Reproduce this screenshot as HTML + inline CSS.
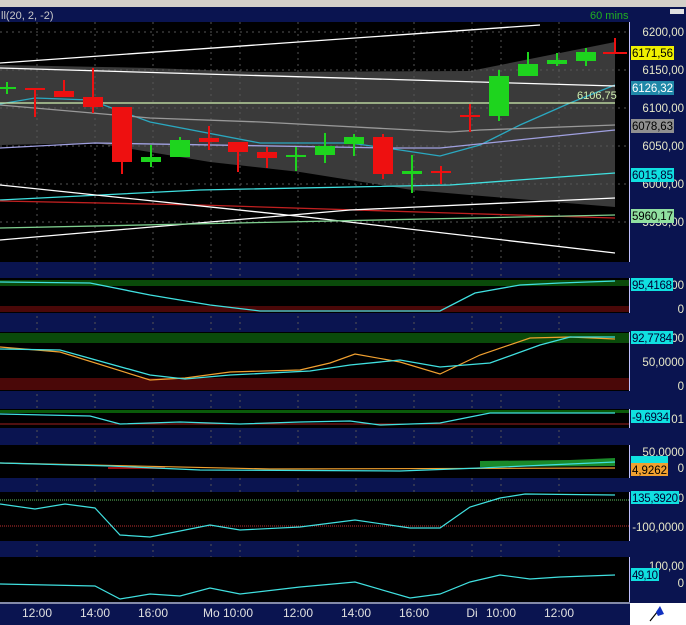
<!DOCTYPE html>
<html><head><meta charset="utf-8"><style>
html,body{margin:0;padding:0;background:#0a1450;}
svg{display:block;font-family:"Liberation Sans",sans-serif;}
</style></head><body>
<svg width="686" height="625" viewBox="0 0 686 625" xmlns="http://www.w3.org/2000/svg">
<rect x="0" y="0" width="686" height="625" fill="#0a1450"/>
<rect x="0" y="0" width="686" height="7" fill="#d4d0c8"/>
<text x="1" y="19" font-size="11" fill="#c8c8c8">ll(20, 2, -2)</text>
<text x="590" y="19" font-size="11" fill="#20b020">60 mins</text>
<rect x="670" y="9" width="14" height="5" fill="#e0e0e0"/>
<rect x="0" y="22" width="630" height="240" fill="#000"/>
<polygon points="0,65 150,68 260,72 470,71 615,42 615,207 470,195 412,190 300,172 210,162 95,143 0,145" fill="#3a3a3a"/>
<g stroke="#555" stroke-dasharray="2,4" stroke-width="1">
<line x1="0" y1="32" x2="630" y2="32"/><line x1="0" y1="70" x2="630" y2="70"/><line x1="0" y1="108" x2="630" y2="108"/><line x1="0" y1="146" x2="630" y2="146"/><line x1="0" y1="184" x2="630" y2="184"/><line x1="0" y1="222" x2="630" y2="222"/>
<line x1="37" y1="22" x2="37" y2="602"/><line x1="95" y1="22" x2="95" y2="602"/><line x1="153" y1="22" x2="153" y2="602"/><line x1="211" y1="22" x2="211" y2="602"/><line x1="240" y1="22" x2="240" y2="602"/><line x1="298" y1="22" x2="298" y2="602"/><line x1="356" y1="22" x2="356" y2="602"/><line x1="414" y1="22" x2="414" y2="602"/><line x1="472" y1="22" x2="472" y2="602"/><line x1="501" y1="22" x2="501" y2="602"/><line x1="559" y1="22" x2="559" y2="602"/>
</g>
<g fill="none" stroke-width="1.3">
<polyline points="0,104 35,98 90,100 150,122 260,143 350,143 400,150 440,156 480,145 520,125 570,103 615,85" stroke="#2aa8c0"/>
<polyline points="0,105 150,118 260,122 450,132 480,130 615,125" stroke="#999"/>
<polyline points="0,148 95,143 390,148 440,148 615,130" stroke="#a0a0e0"/>
<polyline points="0,63 540,25" stroke="#fff"/>
<polyline points="0,68 615,86" stroke="#fff"/>
<line x1="0" y1="103" x2="615" y2="103" stroke="#d0f0b0"/>
<polyline points="0,200 200,190 450,185 615,173" stroke="#40e0e0"/>
<polyline points="0,201 200,205 450,213 615,218" stroke="#c02020"/>
<polyline points="0,185 306,217 615,253" stroke="#fff"/>
<polyline points="0,240 350,210 615,198" stroke="#fff"/>
<polyline points="0,228 615,215" stroke="#80d090"/>
</g>
<text x="577" y="99" font-size="11" fill="#d0f0b0">6106,75</text>
<g stroke-width="2">
<g stroke="#1ed41e"><line x1="7" y1="82" x2="7" y2="94"/><line x1="0" y1="88" x2="16" y2="88"/></g>
<g stroke="#ee1010"><line x1="35" y1="89" x2="35" y2="117"/><line x1="25" y1="89" x2="45" y2="89"/></g>
<g stroke="#ee1010"><line x1="64" y1="80" x2="64" y2="97"/></g><rect x="54" y="91" width="20" height="6" fill="#ee1010"/>
<g stroke="#ee1010"><line x1="93" y1="68" x2="93" y2="113"/></g><rect x="83" y="97" width="20" height="10" fill="#ee1010"/>
<g stroke="#ee1010"><line x1="122" y1="107" x2="122" y2="174"/></g><rect x="112" y="107" width="20" height="55" fill="#ee1010"/>
<g stroke="#1ed41e"><line x1="151" y1="145" x2="151" y2="167"/></g><rect x="141" y="157" width="20" height="5" fill="#1ed41e"/>
<g stroke="#1ed41e"><line x1="180" y1="137" x2="180" y2="157"/></g><rect x="170" y="140" width="20" height="17" fill="#1ed41e"/>
<g stroke="#ee1010"><line x1="209" y1="126" x2="209" y2="150"/></g><rect x="199" y="138" width="20" height="4" fill="#ee1010"/>
<g stroke="#ee1010"><line x1="238" y1="142" x2="238" y2="172"/></g><rect x="228" y="142" width="20" height="10" fill="#ee1010"/>
<g stroke="#ee1010"><line x1="267" y1="147" x2="267" y2="168"/></g><rect x="257" y="152" width="20" height="6" fill="#ee1010"/>
<g stroke="#1ed41e"><line x1="296" y1="147" x2="296" y2="171"/><line x1="286" y1="156" x2="306" y2="156"/></g>
<g stroke="#1ed41e"><line x1="325" y1="133" x2="325" y2="163"/></g><rect x="315" y="146" width="20" height="9" fill="#1ed41e"/>
<g stroke="#1ed41e"><line x1="354" y1="134" x2="354" y2="156"/></g><rect x="344" y="137" width="20" height="7" fill="#1ed41e"/>
<g stroke="#ee1010"><line x1="383" y1="134" x2="383" y2="179"/></g><rect x="373" y="137" width="20" height="37" fill="#ee1010"/>
<g stroke="#1ed41e"><line x1="412" y1="155" x2="412" y2="193"/></g><rect x="402" y="171" width="20" height="3" fill="#1ed41e"/>
<g stroke="#ee1010"><line x1="441" y1="166" x2="441" y2="184"/><line x1="431" y1="172" x2="451" y2="172"/></g>
<g stroke="#ee1010"><line x1="470" y1="104" x2="470" y2="132"/><line x1="460" y1="116" x2="480" y2="116"/></g>
<g stroke="#1ed41e"><line x1="499" y1="70" x2="499" y2="121"/></g><rect x="489" y="76" width="20" height="40" fill="#1ed41e"/>
<g stroke="#1ed41e"><line x1="528" y1="52" x2="528" y2="76"/></g><rect x="518" y="64" width="20" height="12" fill="#1ed41e"/>
<g stroke="#1ed41e"><line x1="557" y1="53" x2="557" y2="66"/></g><rect x="547" y="60" width="20" height="4" fill="#1ed41e"/>
<g stroke="#1ed41e"><line x1="586" y1="48" x2="586" y2="66"/></g><rect x="576" y="52" width="20" height="9" fill="#1ed41e"/>
<g stroke="#ee1010"><line x1="615" y1="38" x2="615" y2="53"/><line x1="603" y1="53" x2="627" y2="53"/></g>
</g>
<rect x="629" y="22" width="1" height="240" fill="#c0c0ff"/>
<g font-size="11.5" fill="#e8e8c8" text-anchor="end">
<text x="684" y="36">6200,00</text><text x="684" y="74">6150,00</text><text x="684" y="112">6100,00</text><text x="684" y="150">6050,00</text><text x="684" y="188">6000,00</text><text x="684" y="226">5950,00</text>
</g>
<g font-size="11.5">
<rect x="631" y="46" width="43" height="14" fill="#f0f000"/><text x="632" y="57" fill="#000" textLength="41">6171,56</text>
<rect x="631" y="81" width="43" height="14" fill="#1f88a8"/><text x="632" y="92" fill="#fff" textLength="41">6126,32</text>
<rect x="631" y="119" width="43" height="14" fill="#909090"/><text x="632" y="130" fill="#000" textLength="41">6078,63</text>
<rect x="631" y="168" width="43" height="14" fill="#10e0e0"/><text x="632" y="179" fill="#003" textLength="41">6015,85</text>
<rect x="631" y="209" width="43" height="14" fill="#90e0a0"/><text x="632" y="220" fill="#000" textLength="41">5960,17</text>
</g>
<rect x="0" y="278" width="630" height="35" fill="#000"/>
<rect x="0" y="280" width="630" height="6" fill="#0a4a0a"/><rect x="0" y="306" width="630" height="6" fill="#4a0808"/>
<polyline points="0,282 90,283 150,295 210,305 260,311 310,311 400,311 440,311 475,293 520,285 560,283 615,281" fill="none" stroke="#40e0e0" stroke-width="1.3"/>
<rect x="629" y="278" width="1" height="35" fill="#c0c0ff"/>
<text x="684" y="289" font-size="11.5" fill="#e8e8c8" text-anchor="end">00</text>
<rect x="631" y="278" width="42" height="13" fill="#10e0e0"/><text x="632" y="289" font-size="11.5" fill="#003" textLength="40">95,4168</text>
<text x="684" y="313" font-size="11.5" fill="#e8e8c8" text-anchor="end">0</text>
<rect x="0" y="332" width="630" height="59" fill="#000"/>
<rect x="0" y="333" width="630" height="10" fill="#0a4a0a"/><rect x="0" y="378" width="630" height="12" fill="#4a0808"/>
<polyline points="0,347 60,352 150,380 185,378 230,372 300,370 330,363 355,354 400,362 440,374 480,355 530,338 570,337 615,339" fill="none" stroke="#f0a030" stroke-width="1.2"/>
<polyline points="0,349 60,350 150,375 185,379 230,375 310,371 350,365 400,360 440,367 490,363 540,345 570,337 615,337" fill="none" stroke="#40e0e0" stroke-width="1.3"/>
<rect x="629" y="332" width="1" height="59" fill="#c0c0ff"/>
<text x="684" y="342" font-size="11.5" fill="#e8e8c8" text-anchor="end">00</text>
<rect x="631" y="331" width="42" height="13" fill="#10e0e0"/><text x="632" y="342" font-size="11.5" fill="#003" textLength="40">92,7784</text>
<text x="684" y="366" font-size="11.5" fill="#e8e8c8" text-anchor="end">50,0000</text>
<text x="684" y="390" font-size="11.5" fill="#e8e8c8" text-anchor="end">0</text>
<rect x="0" y="409" width="630" height="19" fill="#000"/>
<rect x="0" y="410" width="630" height="3" fill="#0a5a0a"/><line x1="0" y1="424" x2="630" y2="424" stroke="#a02020"/>
<polyline points="0,414 90,416 120,424 180,422 240,424 300,422 350,421 380,425 440,423 490,413 615,413" fill="none" stroke="#40e0e0" stroke-width="1.3"/>
<rect x="629" y="409" width="1" height="19" fill="#c0c0ff"/>
<text x="684" y="423" font-size="11.5" fill="#e8e8c8" text-anchor="end">01</text>
<rect x="631" y="410" width="39" height="13" fill="#10e0e0"/><text x="632" y="421" font-size="11.5" fill="#003" textLength="37">-9,6934</text>
<rect x="0" y="445" width="630" height="33" fill="#000"/>
<rect x="108" y="467" width="57" height="2" fill="#a01010"/>
<polygon points="480,467 480,461 570,460 615,458 615,466" fill="#1a8a2a"/>
<polyline points="0,463 270,469 615,468" fill="none" stroke="#f0a030" stroke-width="1.2"/>
<polyline points="0,463 110,466 200,470 400,471 480,468 615,462" fill="none" stroke="#40e0e0" stroke-width="1.2"/>
<rect x="629" y="445" width="1" height="33" fill="#c0c0ff"/>
<text x="684" y="456" font-size="11.5" fill="#e8e8c8" text-anchor="end">50,0000</text>
<rect x="631" y="456" width="37" height="9" fill="#10e0e0"/>
<rect x="631" y="463" width="37" height="13" fill="#f0a030"/><text x="632" y="474" font-size="11.5" fill="#000" textLength="35">4,9262</text>
<text x="684" y="472" font-size="11.5" fill="#e8e8c8" text-anchor="end">0</text>
<rect x="0" y="492" width="630" height="49" fill="#000"/>
<line x1="0" y1="500" x2="630" y2="500" stroke="#60c060" stroke-dasharray="1,1"/>
<line x1="0" y1="526" x2="630" y2="526" stroke="#c03030" stroke-dasharray="1,1"/>
<polyline points="0,504 35,509 65,504 95,508 120,535 150,537 210,525 240,530 300,527 355,520 410,528 440,528 470,507 500,498 525,494 615,495" fill="none" stroke="#40e0e0" stroke-width="1.2"/>
<rect x="629" y="492" width="1" height="49" fill="#c0c0ff"/>
<text x="684" y="502" font-size="11.5" fill="#e8e8c8" text-anchor="end">0</text>
<rect x="631" y="491" width="48" height="13" fill="#10e0e0"/><text x="632" y="502" font-size="11.5" fill="#003" textLength="46">135,3920</text>
<text x="684" y="531" font-size="11.5" fill="#e8e8c8" text-anchor="end">-100,0000</text>
<rect x="0" y="557" width="630" height="45" fill="#000"/>
<polyline points="0,584 95,586 120,599 150,594 180,596 210,588 240,594 300,587 355,582 410,598 440,594 470,582 500,575 530,579 560,577 615,575" fill="none" stroke="#40e0e0" stroke-width="1.2"/>
<rect x="629" y="557" width="1" height="45" fill="#c0c0ff"/>
<text x="684" y="570" font-size="11.5" fill="#e8e8c8" text-anchor="end">100,00</text>
<rect x="631" y="568" width="28" height="13" fill="#10e0e0"/><text x="632" y="579" font-size="11.5" fill="#003" textLength="26">49,10</text>
<text x="684" y="587" font-size="11.5" fill="#e8e8c8" text-anchor="end">0</text>
<line x1="0" y1="603" x2="630" y2="603" stroke="#fff"/>
<g font-size="12" fill="#e0e0e0" text-anchor="middle">
<text x="37" y="617">12:00</text><text x="95" y="617">14:00</text><text x="153" y="617">16:00</text><text x="228" y="617">Mo 10:00</text><text x="298" y="617">12:00</text><text x="356" y="617">14:00</text><text x="414" y="617">16:00</text><text x="472" y="617">Di</text><text x="501" y="617">10:00</text><text x="559" y="617">12:00</text>
</g>
<rect x="630" y="603" width="56" height="22" fill="#fff"/>
<path d="M650 621 L658 611" stroke="#000" stroke-width="1.2"/>
<path d="M656 612 L660 606 L664 614 L658 616 Z" fill="#1030c0"/>
</svg>
</body></html>
